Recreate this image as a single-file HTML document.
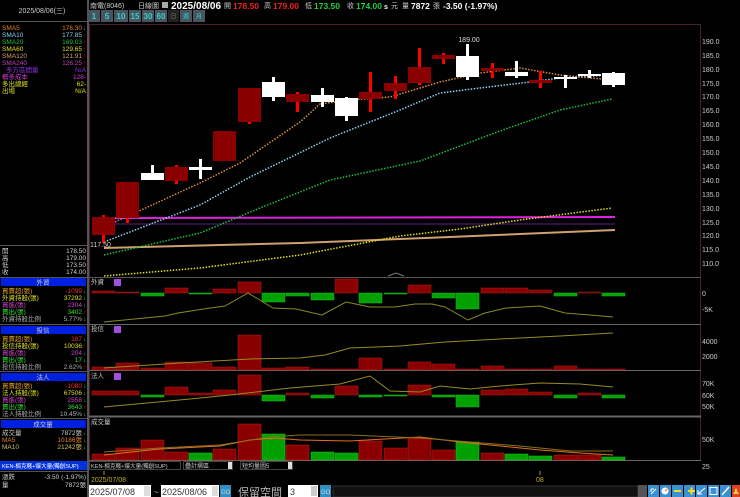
<!DOCTYPE html>
<html><head><meta charset="utf-8"><style>
html,body{margin:0;padding:0;background:#000;width:740px;height:497px;overflow:hidden}
svg{display:block}
text{font-family:"Liberation Sans","Noto Sans CJK TC",sans-serif}
.m{font-family:"Liberation Mono","Noto Sans CJK TC",monospace}
</style></head><body>
<svg width="740" height="497" viewBox="0 0 740 497" xmlns="http://www.w3.org/2000/svg" font-size="7">
<rect width="740" height="497" fill="#000"/>
<rect x="87" y="0" width="2" height="497" fill="#555"/>
<rect x="0" y="21" width="87" height="1" fill="#555"/>
<text x="42" y="13" fill="#ccc" text-anchor="middle" font-size="7">2025/08/06(三)</text>
<g font-size="6.5">
<text x="2" y="30" fill="#e08020">SMA5</text><text x="82" y="30" fill="#e08020" text-anchor="end">176.30</text><text x="83" y="30" fill="#20d040">↓</text>
<text x="2" y="37" fill="#8cd0f0">SMA10</text><text x="82" y="37" fill="#8cd0f0" text-anchor="end">177.85</text><text x="83" y="37" fill="#f00">↑</text>
<text x="2" y="44" fill="#20c040">SMA20</text><text x="82" y="44" fill="#20c040" text-anchor="end">169.03</text><text x="83" y="44" fill="#f00">↑</text>
<text x="2" y="51" fill="#e0e020">SMA60</text><text x="82" y="51" fill="#e0e020" text-anchor="end">129.65</text><text x="83" y="51" fill="#f00">↑</text>
<text x="2" y="58" fill="#d0a070">SMA120</text><text x="82" y="58" fill="#d0a070" text-anchor="end">121.91</text><text x="83" y="58" fill="#f00">↑</text>
<text x="2" y="65" fill="#c040c0">SMA240</text><text x="82" y="65" fill="#c040c0" text-anchor="end">126.25</text><text x="83" y="65" fill="#f00">↑</text>
<text x="6" y="72" fill="#9030e0">多方區間量</text><text x="86" y="72" fill="#9030e0" text-anchor="end">N/A</text>
<text x="2" y="79" fill="#d040d0">概多成本</text><text x="86" y="79" fill="#d040d0" text-anchor="end">128-</text>
<text x="2" y="86" fill="#e0e020">多出總經</text><text x="86" y="86" fill="#e0e020" text-anchor="end">62-</text>
<text x="2" y="93" fill="#e0e020">出場</text><text x="86" y="93" fill="#e0e020" text-anchor="end">N/A</text>
</g>
<rect x="0" y="245" width="87" height="1" fill="#555"/>
<g font-size="6.5" fill="#ccc">
<text x="2" y="253">開</text><text x="86" y="253" text-anchor="end">178.50</text>
<text x="2" y="260">高</text><text x="86" y="260" text-anchor="end">179.00</text>
<text x="2" y="267">低</text><text x="86" y="267" text-anchor="end">173.50</text>
<text x="2" y="274">收</text><text x="86" y="274" text-anchor="end">174.00</text>
</g>
<rect x="0" y="277" width="87" height="1" fill="#555"/>
<rect x="1" y="278" width="85" height="8" fill="#0020e0"/><text x="43" y="284.5" fill="#ccc" text-anchor="middle" font-size="6.5">外資</text>
<g font-size="6.5">
<text x="2" y="293" fill="#e0a020">買賣超(張)</text><text x="82" y="293" fill="#f03030" text-anchor="end">-1099</text><text x="83" y="293" fill="#20d040">↓</text>
<text x="2" y="300" fill="#e0e020">外資持股(張)</text><text x="82" y="300" fill="#e0e020" text-anchor="end">37292</text><text x="83" y="300" fill="#20d040">↓</text>
<text x="2" y="307" fill="#d040d0">買進(張)</text><text x="82" y="307" fill="#d040d0" text-anchor="end">2304</text><text x="83" y="307" fill="#20d040">↓</text>
<text x="2" y="314" fill="#30e030">賣出(張)</text><text x="82" y="314" fill="#30e030" text-anchor="end">3402</text><text x="83" y="314" fill="#f00">↑</text>
<text x="2" y="321" fill="#aaa">外資持股比例</text><text x="82" y="321" fill="#aaa" text-anchor="end">5.77%</text><text x="83" y="321" fill="#20d040">↓</text>
</g>
<rect x="0" y="324" width="87" height="1" fill="#555"/>
<rect x="1" y="326" width="85" height="8" fill="#0020e0"/><text x="43" y="332.5" fill="#ccc" text-anchor="middle" font-size="6.5">投信</text>
<g font-size="6.5">
<text x="2" y="341" fill="#e0a020">買賣超(張)</text><text x="82" y="341" fill="#f03030" text-anchor="end">187</text><text x="83" y="341" fill="#20d040">↓</text>
<text x="2" y="348" fill="#e0e020">投信持股(張)</text><text x="82" y="348" fill="#e0e020" text-anchor="end">10036</text><text x="83" y="348" fill="#f00">↑</text>
<text x="2" y="355" fill="#d040d0">買進(張)</text><text x="82" y="355" fill="#d040d0" text-anchor="end">204</text><text x="83" y="355" fill="#20d040">↓</text>
<text x="2" y="362" fill="#30e030">賣出(張)</text><text x="82" y="362" fill="#30e030" text-anchor="end">17</text><text x="83" y="362" fill="#20d040">↓</text>
<text x="2" y="369" fill="#aaa">投信持股比例</text><text x="82" y="369" fill="#aaa" text-anchor="end">2.62%</text><text x="83" y="369" fill="#f00">↑</text>
</g>
<rect x="0" y="371" width="87" height="1" fill="#555"/>
<rect x="1" y="373" width="85" height="8" fill="#0020e0"/><text x="43" y="379.5" fill="#ccc" text-anchor="middle" font-size="6.5">法人</text>
<g font-size="6.5">
<text x="2" y="388" fill="#e0a020">買賣超(張)</text><text x="82" y="388" fill="#f03030" text-anchor="end">-1080</text><text x="83" y="388" fill="#20d040">↓</text>
<text x="2" y="395" fill="#e0e020">法人持股(張)</text><text x="82" y="395" fill="#e0e020" text-anchor="end">67506</text><text x="83" y="395" fill="#20d040">↓</text>
<text x="2" y="402" fill="#d040d0">買進(張)</text><text x="82" y="402" fill="#d040d0" text-anchor="end">2558</text><text x="83" y="402" fill="#20d040">↓</text>
<text x="2" y="409" fill="#30e030">賣出(張)</text><text x="82" y="409" fill="#30e030" text-anchor="end">3643</text><text x="83" y="409" fill="#f00">↑</text>
<text x="2" y="416" fill="#aaa">法人持股比例</text><text x="82" y="416" fill="#aaa" text-anchor="end">10.45%</text><text x="83" y="416" fill="#20d040">↓</text>
</g>
<rect x="0" y="418" width="87" height="1" fill="#555"/>
<rect x="1" y="420" width="85" height="8" fill="#0020e0"/><text x="43" y="426.5" fill="#ccc" text-anchor="middle" font-size="6.5">成交量</text>
<g font-size="6.5">
<text x="2" y="435" fill="#ccc">成交量</text><text x="82" y="435" fill="#ccc" text-anchor="end">7872張</text><text x="83" y="435" fill="#20d040">↓</text>
<text x="2" y="442" fill="#e08020">MA5</text><text x="82" y="442" fill="#e08020" text-anchor="end">10186張</text><text x="83" y="442" fill="#20d040">↓</text>
<text x="2" y="449" fill="#d0c060">MA10</text><text x="82" y="449" fill="#d0c060" text-anchor="end">21242張</text><text x="83" y="449" fill="#20d040">↓</text>
</g>
<rect x="0" y="461" width="87" height="9" fill="#0030e0"/><text x="2" y="468" fill="#fff" font-size="5.6">KEN-楠克賤+爆大量(獨創SUP)</text>
<rect x="0" y="471" width="87" height="1" fill="#555"/>
<text x="2" y="479" fill="#ccc" font-size="6.5">漲跌</text><text x="86" y="479" fill="#ccc" text-anchor="end" font-size="6.5">-3.50 (-1.97%)</text>
<text x="2" y="487" fill="#ccc" font-size="6.5">量</text><text x="86" y="487" fill="#ccc" text-anchor="end" font-size="6.5">7872張</text>

<text x="90" y="8" fill="#ccc" font-size="7">南電(8046)</text>
<text x="138" y="8" fill="#ccc" font-size="7">日線圖</text>
<rect x="162" y="2" width="6" height="6" fill="#aaa"/>
<text x="171" y="9" fill="#fff" font-size="10" font-weight="bold">2025/08/06</text>
<text x="224" y="8" fill="#ccc" font-size="7">開</text><text x="233" y="9" fill="#f02020" font-size="8.5" font-weight="bold">178.50</text>
<text x="264" y="8" fill="#ccc" font-size="7">高</text><text x="273" y="9" fill="#f02020" font-size="8.5" font-weight="bold">179.00</text>
<text x="305" y="8" fill="#ccc" font-size="7">低</text><text x="314" y="9" fill="#20d040" font-size="8.5" font-weight="bold">173.50</text>
<text x="347" y="8" fill="#ccc" font-size="7">收</text><text x="356" y="9" fill="#20d040" font-size="8.5" font-weight="bold">174.00</text>
<text x="384" y="9" fill="#fff" font-size="7" font-weight="bold">s</text><text x="391" y="8" fill="#ccc" font-size="7">元</text>
<text x="402" y="8" fill="#ccc" font-size="7">量</text><text x="411" y="9" fill="#fff" font-size="8.5" font-weight="bold">7872</text>
<text x="433" y="8" fill="#ccc" font-size="7">張</text><text x="443" y="9" fill="#fff" font-size="8.5" font-weight="bold">-3.50 (-1.97%)</text>
<g font-size="8" font-weight="bold" fill="#30d0d0" text-anchor="middle">
<rect x="88" y="10" width="12" height="12" fill="#4a545e"/><text x="94" y="19">1</text>
<rect x="101" y="10" width="12" height="12" fill="#4a545e"/><text x="107" y="19">5</text>
<rect x="114" y="10" width="14" height="12" fill="#4a545e"/><text x="121" y="19">10</text>
<rect x="129" y="10" width="12" height="12" fill="#4a545e"/><text x="135" y="19">15</text>
<rect x="142" y="10" width="12" height="12" fill="#4a545e"/><text x="148" y="19">30</text>
<rect x="155" y="10" width="12" height="12" fill="#4a545e"/><text x="161" y="19">60</text>
<rect x="168" y="10" width="11" height="12" fill="#222"/><text x="173.5" y="18.5" font-size="6" font-weight="normal" fill="#777">日</text>
<rect x="180" y="10" width="12" height="12" fill="#4a545e"/><text x="186" y="18.5" font-size="6" font-weight="normal">週</text>
<rect x="193" y="10" width="12" height="12" fill="#4a545e"/><text x="199" y="18.5" font-size="6" font-weight="normal">月</text>
</g>
<rect x="89.5" y="24.5" width="611" height="436" fill="none" stroke="#4a2030"/>
<line x1="89" y1="277.5" x2="701" y2="277.5" stroke="#555"/>
<line x1="89" y1="324.5" x2="701" y2="324.5" stroke="#666"/>
<line x1="89" y1="370.5" x2="701" y2="370.5" stroke="#666"/>
<line x1="89" y1="416.5" x2="701" y2="416.5" stroke="#666" stroke-width="2"/>
<line x1="89" y1="460.5" x2="701" y2="460.5" stroke="#666"/>
<g font-size="7" fill="#ccc" class="m">
<text x="702" y="44">190.0</text><text x="702" y="58">185.0</text><text x="702" y="72">180.0</text><text x="702" y="86">175.0</text><text x="702" y="99">170.0</text><text x="702" y="113">165.0</text><text x="702" y="127">160.0</text><text x="702" y="141">155.0</text><text x="702" y="155">150.0</text><text x="702" y="169">145.0</text><text x="702" y="183">140.0</text><text x="702" y="197">135.0</text><text x="702" y="211">130.0</text><text x="702" y="225">125.0</text><text x="702" y="238">120.0</text><text x="702" y="252">115.0</text><text x="702" y="266">110.0</text>
<text x="702" y="296">0</text><text x="702" y="312">-5K</text>
<text x="702" y="344">4000</text><text x="702" y="359">2000</text>
<text x="702" y="386">70K</text><text x="702" y="398">60K</text><text x="702" y="409">50K</text>
<text x="702" y="442">50K</text><text x="702" y="469">25</text>
</g>
<polyline points="104,218 615,217" fill="none" stroke="#e020e0" stroke-width="2"/>
<polyline points="104,224 615,224" fill="none" stroke="#602080" stroke-width="1"/>
<polyline points="104,248 300,243 450,237 615,230" fill="none" stroke="#d0a070" stroke-width="2"/>
<g fill="none" stroke-width="1.5" stroke-dasharray="1.5,1.5">
<polyline points="104,276 200,268 300,255 400,236 460,229 520,220 612,208" stroke="#e0e020"/>
<polyline points="104,255 200,233 260,208 330,180 420,161 500,131 560,110 612,99" stroke="#20c040"/>
<polyline points="104,242 200,205 250,177 330,138 400,110 440,93 480,88 530,82 560,78 612,75" stroke="#8cd0f0"/>
<polyline points="104,227 200,183 240,163 300,122 320,104 350,100 390,97 440,82 480,73 520,68 560,75 612,80" stroke="#e09040"/>
</g>
<g>
<rect x="102" y="215" width="3" height="28" fill="#f00"/><rect x="92" y="217" width="23" height="18" fill="#8a0000"/>
<rect x="126" y="182" width="3" height="41" fill="#f00"/><rect x="116" y="182" width="23" height="36" fill="#8a0000"/>
<rect x="151" y="165" width="3" height="15" fill="#fff"/><rect x="141" y="173" width="23" height="7" fill="#fff"/>
<rect x="175" y="165" width="3" height="19" fill="#f00"/><rect x="165" y="167" width="23" height="14" fill="#8a0000"/>
<rect x="199" y="159" width="3" height="20" fill="#fff"/><rect x="189" y="167" width="23" height="3" fill="#fff"/>
<rect x="213" y="131" width="23" height="30" fill="#8a0000"/>
<rect x="248" y="88" width="3" height="36" fill="#f00"/><rect x="238" y="88" width="23" height="34" fill="#8a0000"/>
<rect x="272" y="77" width="3" height="24" fill="#fff"/><rect x="262" y="82" width="23" height="15" fill="#fff"/>
<rect x="296" y="92" width="3" height="20" fill="#f00"/><rect x="286" y="94" width="23" height="8" fill="#8a0000"/>
<rect x="321" y="88" width="3" height="19" fill="#fff"/><rect x="311" y="95" width="23" height="7" fill="#fff"/>
<rect x="345" y="97" width="3" height="24" fill="#fff"/><rect x="335" y="98" width="23" height="18" fill="#fff"/>
<rect x="369" y="72" width="3" height="40" fill="#f00"/><rect x="359" y="92" width="23" height="7" fill="#8a0000"/>
<rect x="394" y="76" width="3" height="23" fill="#f00"/><rect x="384" y="83" width="23" height="8" fill="#8a0000"/>
<rect x="418" y="48" width="3" height="37" fill="#f00"/><rect x="408" y="67" width="23" height="16" fill="#8a0000"/>
<rect x="442" y="53" width="3" height="11" fill="#f00"/><rect x="432" y="55" width="23" height="4" fill="#8a0000"/>
<rect x="466" y="44" width="3" height="36" fill="#fff"/><rect x="456" y="56" width="23" height="21" fill="#fff"/>
<text x="469" y="42" fill="#ddd" font-size="7" text-anchor="middle">189.00</text>
<rect x="491" y="63" width="3" height="15" fill="#f00"/><rect x="481" y="68" width="23" height="3" fill="#8a0000"/>
<rect x="515" y="61" width="3" height="17" fill="#fff"/><rect x="505" y="72" width="23" height="4" fill="#fff"/>
<rect x="539" y="71" width="3" height="17" fill="#f00"/><rect x="529" y="80" width="23" height="3" fill="#8a0000"/>
<rect x="564" y="75" width="3" height="13" fill="#fff"/><rect x="554" y="77" width="23" height="2" fill="#fff"/>
<rect x="588" y="70" width="3" height="8" fill="#fff"/><rect x="578" y="74" width="23" height="2" fill="#fff"/>
<rect x="612" y="72" width="3" height="15" fill="#fff"/><rect x="602" y="73" width="23" height="12" fill="#fff"/>
</g>
<text x="90" y="247" fill="#ccc" font-size="7">117.50</text>
<polyline points="388,276 396,273 404,276" fill="none" stroke="#777"/>
<g font-size="6.5" fill="#ccc">
<text x="91" y="284">外資</text><rect x="114" y="279" width="7" height="7" fill="#a050e0"/>
<text x="91" y="331">投信</text><rect x="114" y="326" width="7" height="7" fill="#a050e0"/>
<text x="91" y="378">法人</text><rect x="114" y="373" width="7" height="7" fill="#a050e0"/>
<text x="91" y="424">成交量</text>
</g>
<g stroke="#b02020" stroke-width="0.5">
<rect x="92" y="291" width="23" height="2" fill="#8a0000"/><rect x="116" y="292" width="23" height="1" fill="#8a0000"/>
<rect x="165" y="288" width="23" height="5" fill="#8a0000"/><rect x="213" y="289" width="23" height="4" fill="#8a0000"/>
<rect x="238" y="282" width="23" height="11" fill="#8a0000"/><rect x="335" y="279" width="23" height="14" fill="#8a0000"/>
<rect x="408" y="285" width="23" height="8" fill="#8a0000"/><rect x="481" y="288" width="23" height="5" fill="#8a0000"/>
<rect x="505" y="288" width="23" height="5" fill="#8a0000"/><rect x="529" y="290" width="23" height="3" fill="#8a0000"/>
<rect x="578" y="292" width="23" height="1" fill="#500000"/>
</g>
<g stroke="#20c020" stroke-width="0.5" fill="#00a000">
<rect x="141" y="293" width="23" height="3"/><rect x="189" y="293" width="23" height="1"/>
<rect x="262" y="293" width="23" height="9"/><rect x="286" y="293" width="23" height="3"/>
<rect x="311" y="293" width="23" height="7"/><rect x="359" y="293" width="23" height="10"/>
<rect x="384" y="293" width="23" height="1"/><rect x="432" y="293" width="23" height="5"/>
<rect x="456" y="293" width="23" height="16"/><rect x="554" y="293" width="23" height="3"/>
<rect x="602" y="293" width="23" height="3"/>
</g>
<polyline points="104,322 165,316 178,313 210,308 225,306 248,293 273,308 296,309 322,315 346,302 370,307 395,307 415,304 432,304 445,307 468,320 485,313 506,308 540,306 565,313 590,315 613,317" fill="none" stroke="#8a8a20"/>
<g fill="#8a0000" stroke="#b02020" stroke-width="0.5">
<rect x="92" y="367" width="23" height="3"/><rect x="116" y="363" width="23" height="7"/><rect x="141" y="368" width="23" height="2"/>
<rect x="165" y="362" width="23" height="8"/><rect x="189" y="363" width="23" height="7"/><rect x="213" y="367" width="23" height="3"/>
<rect x="238" y="335" width="23" height="35"/><rect x="262" y="368" width="23" height="2"/><rect x="286" y="367" width="23" height="3"/>
<rect x="311" y="369" width="23" height="1"/><rect x="335" y="369" width="23" height="1"/><rect x="359" y="358" width="23" height="12"/>
<rect x="384" y="369" width="23" height="1"/><rect x="408" y="362" width="23" height="8"/><rect x="432" y="364" width="23" height="6"/>
<rect x="456" y="369" width="23" height="1"/><rect x="481" y="366" width="23" height="4"/><rect x="505" y="369" width="23" height="1"/>
<rect x="529" y="369" width="23" height="1"/><rect x="554" y="366" width="23" height="4"/><rect x="578" y="369" width="23" height="1"/><rect x="602" y="369" width="23" height="1"/>
</g>
<polyline points="104,368 180,363 250,359 300,358 325,355 350,348 400,346 445,342 500,339 560,336 613,333" fill="none" stroke="#9a8a20"/>
<g fill="#8a0000" stroke="#b02020" stroke-width="0.5">
<rect x="92" y="391" width="23" height="4"/><rect x="116" y="391" width="23" height="4"/><rect x="165" y="387" width="23" height="8"/>
<rect x="189" y="393" width="23" height="2"/><rect x="213" y="390" width="23" height="5"/><rect x="238" y="375" width="23" height="20"/>
<rect x="286" y="393" width="23" height="2"/><rect x="335" y="386" width="23" height="9"/><rect x="408" y="385" width="23" height="10"/>
<rect x="481" y="390" width="23" height="5"/><rect x="505" y="389" width="23" height="6"/><rect x="529" y="392" width="23" height="3"/>
<rect x="578" y="393" width="23" height="2"/>
</g>
<g fill="#00a000" stroke="#20c020" stroke-width="0.5">
<rect x="141" y="395" width="23" height="2"/><rect x="262" y="395" width="23" height="6"/><rect x="311" y="395" width="23" height="3"/>
<rect x="359" y="395" width="23" height="2"/><rect x="384" y="395" width="23" height="1"/><rect x="432" y="395" width="23" height="2"/>
<rect x="456" y="395" width="23" height="12"/><rect x="554" y="395" width="23" height="3"/><rect x="602" y="395" width="23" height="3"/>
</g>
<polyline points="104,407 190,399 230,395 290,388 340,384 370,376 390,391 420,392 440,386 470,389 500,386 540,383 580,384 613,387" fill="none" stroke="#9a8a20"/>
<g fill="#8a0000" stroke="#c02020" stroke-width="0.5">
<rect x="92" y="454" width="23" height="6"/><rect x="116" y="448" width="23" height="12"/><rect x="141" y="440" width="23" height="20"/>
<rect x="165" y="452" width="23" height="8"/><rect x="213" y="449" width="23" height="11"/><rect x="238" y="424" width="23" height="36"/>
<rect x="286" y="445" width="23" height="15"/><rect x="359" y="441" width="23" height="19"/><rect x="384" y="448" width="23" height="12"/>
<rect x="408" y="438" width="23" height="22"/><rect x="432" y="450" width="23" height="10"/><rect x="481" y="453" width="23" height="7"/>
<rect x="554" y="455" width="23" height="5"/><rect x="578" y="455" width="23" height="5"/>
</g>
<g fill="#00a000" stroke="#20d020" stroke-width="0.5">
<rect x="189" y="453" width="23" height="7"/><rect x="262" y="434" width="23" height="26"/><rect x="311" y="452" width="23" height="8"/>
<rect x="335" y="453" width="23" height="7"/><rect x="456" y="442" width="23" height="18"/><rect x="505" y="454" width="23" height="6"/>
<rect x="529" y="456" width="23" height="4"/><rect x="602" y="457" width="23" height="3"/>
</g>
<polyline points="104,455 160,449 220,446 250,440 275,438 300,440 350,441 420,437 460,442 500,446 540,450 580,453 613,455" fill="none" stroke="#e07020"/>
<polyline points="104,452 160,448 220,445 270,437 300,435 350,435 420,438 470,442 520,446 570,451 613,451" fill="none" stroke="#8a7020"/>
<rect x="89" y="461" width="612" height="9" fill="#000"/>
<rect x="89.5" y="461.5" width="91" height="8" fill="#000" stroke="#888" stroke-width="0.5"/><text x="91" y="468" fill="#ccc" font-size="5.6">KEN-楠克賤+爆大量(獨創SUP)</text>
<rect x="183.5" y="461.5" width="49" height="8" fill="#000" stroke="#888" stroke-width="0.5"/><text x="185" y="468" fill="#ccc" font-size="6">疊計摺區</text><rect x="228" y="462" width="4" height="7" fill="#ddd"/>
<rect x="240.5" y="461.5" width="52" height="8" fill="#000" stroke="#888" stroke-width="0.5"/><text x="242" y="468" fill="#ccc" font-size="6">短均量圖5</text><rect x="288" y="462" width="4" height="7" fill="#ddd"/>
<line x1="104" y1="471" x2="104" y2="475" stroke="#aa9a20"/><text x="91" y="482" fill="#c0b030" font-size="7">2025/07/08</text>
<line x1="540" y1="471" x2="540" y2="475" stroke="#aa9a20"/><text x="536" y="482" fill="#c0b030" font-size="7">08</text>
<rect x="89" y="485" width="62" height="12" fill="#fff"/><text x="90" y="495" fill="#333" font-size="9">2025/07/08</text><rect x="144" y="486" width="6" height="10" fill="#ddd"/>
<text x="154" y="495" fill="#ccc" font-size="8">~</text>
<rect x="161" y="485" width="58" height="12" fill="#fff"/><text x="162" y="495" fill="#333" font-size="9">2025/08/06</text><rect x="212" y="486" width="6" height="10" fill="#ddd"/>
<rect x="220" y="485" width="11" height="12" fill="#3090c0"/><text x="221" y="494" fill="#cde" font-size="6">GO</text>
<text x="238" y="496" fill="#bbb" font-size="11">保留空間</text>
<rect x="288" y="485" width="30" height="12" fill="#fff"/><text x="290" y="495" fill="#333" font-size="9">3</text><rect x="311" y="486" width="6" height="10" fill="#ccc"/>
<rect x="320" y="485" width="11" height="12" fill="#3090c0"/><text x="321" y="494" fill="#cde" font-size="6">GO</text>
<rect x="333" y="486" width="305" height="11" fill="#111" stroke="#555" stroke-width="0.5"/>
<rect x="638" y="485" width="9" height="12" fill="#555"/>
<g fill="#3a90d0">
<rect x="648" y="485" width="11" height="12"/><rect x="660" y="485" width="11" height="12"/><rect x="672" y="485" width="11" height="12"/><rect x="684" y="485" width="11" height="12"/><rect x="696" y="485" width="11" height="12"/><rect x="708" y="485" width="11" height="12"/><rect x="720" y="485" width="11" height="12"/>
</g>
<rect x="732" y="485" width="8" height="12" fill="#e04020"/>
<path d="M651 494 L656 489 M651 489 L651 492 M651 489 L654 489" stroke="#fff" fill="none"/>
<circle cx="665" cy="491" r="3.5" fill="#fff"/><path d="M665 491 L667 489" stroke="#e06020"/>
<rect x="674" y="490" width="7" height="2" fill="#f0e020"/>
<rect x="688" y="490" width="7" height="2" fill="#f0e020"/><rect x="690.5" y="487.5" width="2" height="7" fill="#f0e020"/>
<path d="M698 494 L705 488 M698 490 L698 494 L702 494" stroke="#fff" fill="none"/>
<rect x="710" y="487.5" width="7" height="7" fill="none" stroke="#fff"/>
<path d="M722 495 L729 487" stroke="#fff" stroke-width="1.5"/>
<path d="M733 494 L739 494 L737 491 L737 489 A1.5 1.5 0 0 0 735 489 L735 491 Z" fill="#f0d040"/>
</svg>
</body></html>
